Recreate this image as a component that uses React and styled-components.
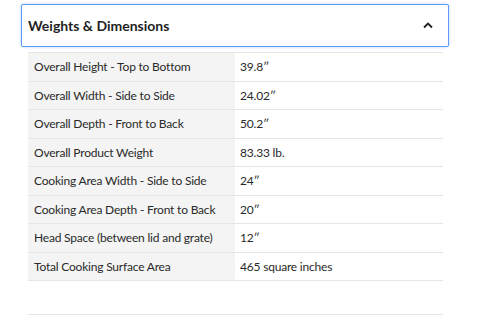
import React from 'react';
import styled, { createGlobalStyle } from 'styled-components';

const GlobalStyle = createGlobalStyle`
  body {
    margin: 0;
    background: #fff;
    font-family: Lato, "Open Sans", sans-serif;
    color: #222;
  }
`;

const Page = styled.div`
  width: 480px;
  height: 316px;
  padding: 4px 31px 0 21px;
  box-sizing: border-box;
  overflow: hidden;
`;

const Header = styled.button`
  display: flex;
  align-items: center;
  justify-content: space-between;
  width: 428px;
  height: 43px;
  padding: 0 15px 0 6px;
  box-sizing: border-box;
  background: #fff;
  border: 1.5px solid #5b9bf3;
  border-radius: 2px;
  box-shadow: 0 0 3px rgba(91, 155, 243, 0.45);
  font-family: inherit;
  cursor: pointer;
`;

const Title = styled.h3`
  margin: 0;
  font-size: 14px;
  font-weight: 700;
  color: #1f1f1f;
`;

const Table = styled.div`
  margin: 5px 0 0 7px;
  width: 415px;
  border-top: 1px solid #e6e6e6;
`;

const Row = styled.div`
  display: grid;
  grid-template-columns: 207px 1fr;
  height: 28.5px;
  border-bottom: 1px solid #e6e6e6;
  box-sizing: border-box;
  font-size: 12px;
  letter-spacing: -0.2px;
  color: #2a2a2a;
`;

const Cell = styled.div`
  display: flex;
  align-items: center;
  padding-left: ${p => (p.$label ? '6px' : '5px')};
  background: ${p => (p.$label ? '#f4f4f4' : '#fff')};
`;

const Footer = styled.div`
  margin: 33px 0 0 7px;
  width: 415px;
  border-top: 1px solid #e6e6e6;
`;

const specs = [
  ['Overall Height - Top to Bottom', '39.8\u2033'],
  ['Overall Width - Side to Side', '24.02\u2033'],
  ['Overall Depth - Front to Back', '50.2\u2033'],
  ['Overall Product Weight', '83.33 lb.'],
  ['Cooking Area Width - Side to Side', '24\u2033'],
  ['Cooking Area Depth - Front to Back', '20\u2033'],
  ['Head Space (between lid and grate)', '12\u2033'],
  ['Total Cooking Surface Area', '465 square inches'],
];

function Chevron() {
  return (
    <svg width="10" height="7" viewBox="0 0 10 7" fill="none">
      <path d="M1 5.5L5 1.5L9 5.5" stroke="#222" strokeWidth="1.8" />
    </svg>
  );
}

export default function App() {
  return (
    <Page>
      <GlobalStyle />
      <Header>
        <Title>Weights &amp; Dimensions</Title>
        <Chevron />
      </Header>
      <Table>
        {specs.map(([label, value]) => (
          <Row key={label}>
            <Cell $label>{label}</Cell>
            <Cell>{value}</Cell>
          </Row>
        ))}
      </Table>
      <Footer />
    </Page>
  );
}
